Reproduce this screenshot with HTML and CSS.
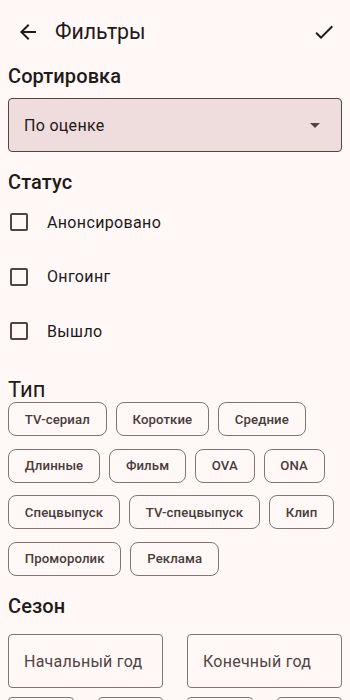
FILE: index.html
```html
<!DOCTYPE html>
<html lang="ru">
<head>
<meta charset="utf-8">
<link rel="stylesheet" href="styles.css">
</head>
<body>
<header class="topbar">
  <span class="icon-btn">
    <svg width="24" height="24" viewBox="0 0 24 24"><path d="M20 11H7.83l5.59-5.59L12 4l-8 8 8 8 1.41-1.41L7.83 13H20v-2z" fill="#231919"/></svg>
  </span>
  <h1 class="title">Фильтры</h1>
  <span class="icon-btn right">
    <svg width="24" height="24" viewBox="0 0 24 24"><path d="M9 16.17L4.83 12l-1.42 1.41L9 19 21 7l-1.41-1.41z" fill="#231919"/></svg>
  </span>
</header>
<main class="content">
  <h2 class="heading">Сортировка</h2>
  <div class="dropdown">
    <span class="dropdown-text">По оценке</span>
    <svg width="24" height="24" viewBox="0 0 24 24"><path d="M7 10l5 5 5-5z" fill="#534342"/></svg>
  </div>

  <h2 class="heading status">Статус</h2>
  <div class="checks">
    <label class="check-row"><span class="box"></span><span class="check-label">Анонсировано</span></label>
    <label class="check-row"><span class="box"></span><span class="check-label">Онгоинг</span></label>
    <label class="check-row"><span class="box"></span><span class="check-label">Вышло</span></label>
  </div>

  <h2 class="heading type">Тип</h2>
  <div class="chips">
    <span class="chip">TV-сериал</span>
    <span class="chip">Короткие</span>
    <span class="chip">Средние</span>
    <span class="chip">Длинные</span>
    <span class="chip">Фильм</span>
    <span class="chip">OVA</span>
    <span class="chip">ONA</span>
    <span class="chip">Спецвыпуск</span>
    <span class="chip">TV-спецвыпуск</span>
    <span class="chip">Клип</span>
    <span class="chip">Проморолик</span>
    <span class="chip">Реклама</span>
  </div>

  <h2 class="heading season">Сезон</h2>
  <div class="fields">
    <div class="field">Начальный год</div>
    <div class="field">Конечный год</div>
  </div>
  <div class="fields small">
    <div class="pair"><div class="field f1"></div><div class="field f2"></div></div>
    <div class="pair"><div class="field f3"></div><div class="field f4"></div></div>
  </div>
</main>
</body>
</html>
```

FILE: styles.css
```css
* { box-sizing: border-box; }
html, body {
  margin: 0;
  padding: 0;
  background: #fff8f7;
  font-family: Roboto, "Noto Sans", sans-serif;
  color: #231919;
  overflow: hidden;
  height: 700px;
}
.topbar {
  height: 64px;
  display: flex;
  align-items: center;
  padding: 0 14px 0 16px;
}
.icon-btn {
  width: 24px;
  height: 24px;
  display: flex;
}
.icon-btn.right { margin-left: auto; }
.title {
  margin: 0 0 0 15px;
  font-size: 21.3px;
  font-weight: 400;
  line-height: 28px;
}
.content {
  padding: 0 8px;
}
.heading {
  margin: 0;
  font-size: 20px;
  font-weight: 500;
  line-height: 24px;
  letter-spacing: 0.1px;
}
.dropdown {
  margin-top: 10px;
  height: 54px;
  border: 1px solid #534342;
  border-radius: 4px;
  background: #efdcdc;
  display: flex;
  align-items: center;
  padding: 0 14px 0 15px;
  justify-content: space-between;
}
.dropdown-text {
  font-size: 16px;
  letter-spacing: 0.3px;
  color: #231919;
}
.heading.status { margin-top: 18px; }
.checks {
  margin-top: 1px;
  display: flex;
  flex-direction: column;
}
.check-row {
  height: 54.5px;
  display: flex;
  align-items: center;
}
.box {
  width: 18px;
  height: 18px;
  margin-left: 2px;
  border: 2px solid #534342;
  border-radius: 2px;
}
.check-label {
  margin-left: 19px;
  font-size: 16px;
  letter-spacing: 0.35px;
}
.heading.type {
  margin-top: 19px;
  font-size: 22px;
  font-weight: 400;
  letter-spacing: 0;
}
.chips {
  margin-top: 0.5px;
  display: flex;
  flex-wrap: wrap;
  column-gap: 9px;
  row-gap: 12.5px;
}
.chip {
  height: 34px;
  padding: 0 15.8px;
  border: 1px solid #857371;
  border-radius: 8px;
  display: flex;
  align-items: center;
  font-size: 13.2px;
  font-weight: 500;
  letter-spacing: 0.1px;
  color: #4a3b3b;
}
.heading.season { margin-top: 18.5px; }
.fields {
  margin-top: 16px;
  display: grid;
  grid-template-columns: 1fr 1fr;
  column-gap: 24px;
}
.field {
  height: 54px;
  border: 1px solid #857371;
  border-radius: 4px;
  display: flex;
  align-items: center;
  padding-left: 15px;
  font-size: 16px;
  letter-spacing: 0.25px;
  color: #534342;
}
.fields.small { margin-top: 9px; }
.pair {
  display: flex;
  gap: 24px;
}
.pair .field { flex: 1; }
```
